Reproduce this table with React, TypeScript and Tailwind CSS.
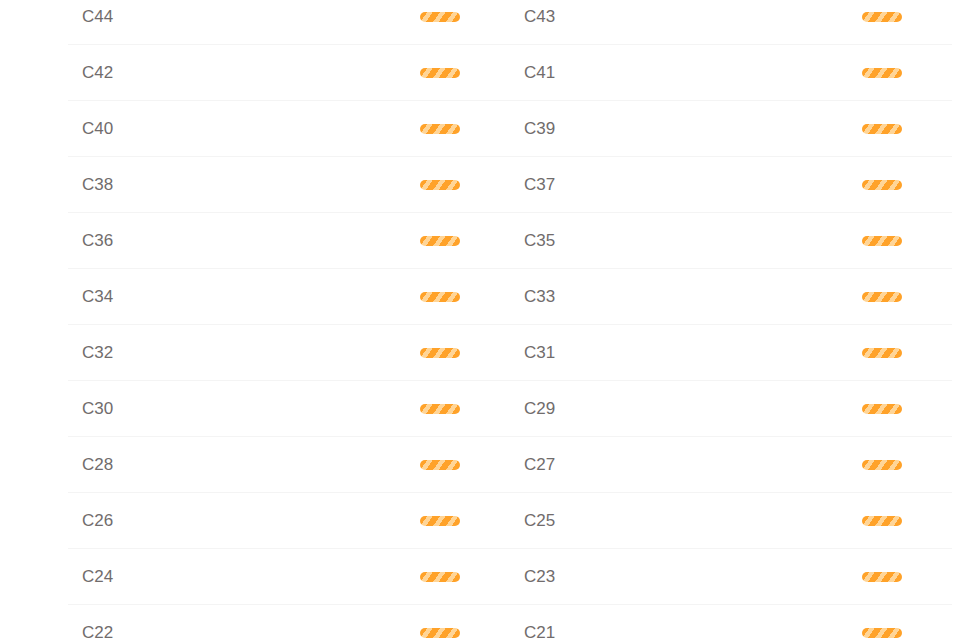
import React from "react";

const rows: [string, string][] = [];
for (let n = 44; n >= 22; n -= 2) {
  rows.push([`C${n}`, `C${n - 1}`]);
}

function Bar() {
  return (
    <div className="h-[10px] w-[40px] rounded-full bg-[repeating-linear-gradient(125deg,#ffa229_0px,#ffa229_6px,#ffd597_6px,#ffd597_10.5px)]" />
  );
}

function Cell({ label }: { label: string }) {
  return (
    <div className="flex h-[55px] w-[442px] items-center justify-between pl-[14px] pr-[50px]">
      <span className="text-[17px] text-[#716c6c]">{label}</span>
      <Bar />
    </div>
  );
}

export default function App() {
  return (
    <div
      className="h-[639px] w-[953px] overflow-hidden bg-white"
      style={{ fontFamily: '"Liberation Sans", Arial, sans-serif' }}
    >
      <div className="-mt-[11px] ml-[68px] w-[884px]">
        {rows.map(([a, b]) => (
          <div key={a} className="flex border-b border-[#f4f4f4]">
            <Cell label={a} />
            <Cell label={b} />
          </div>
        ))}
      </div>
    </div>
  );
}
